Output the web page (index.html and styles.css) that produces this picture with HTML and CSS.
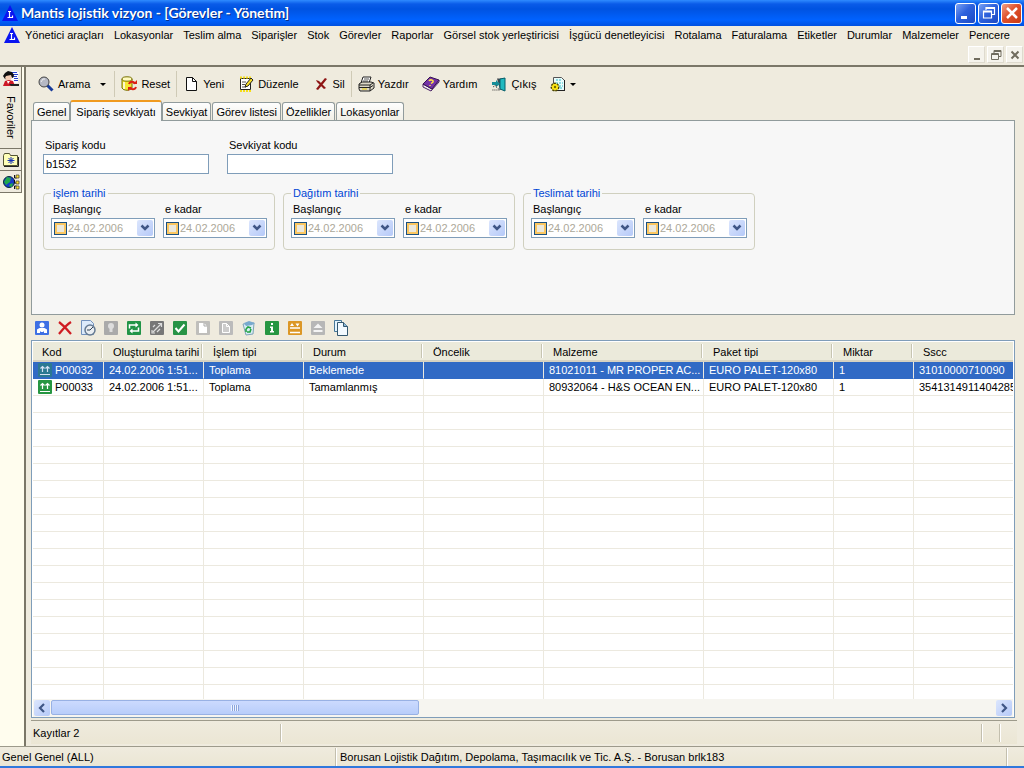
FILE: index.html
```html
<!DOCTYPE html>
<html lang="tr">
<head>
<meta charset="utf-8">
<title>Mantis lojistik vizyon - [Görevler - Yönetim]</title>
<link rel="stylesheet" href="styles.css">
</head>
<body>
<svg class="defs" aria-hidden="true">
  <symbol id="logo" viewBox="0 0 16 16"><path d="M8 0L16 16H0Z" fill="#0a14f0"/><path d="M6 6.500h3M7.500 6.500v6M5.500 12.500h5v-2" fill="none" stroke="#fff" stroke-width="1.200"/></symbol>
  <symbol id="chev" viewBox="0 0 10 10"><path d="M1.500 2.500L5 6L8.500 2.500" fill="none" stroke="#3f5686" stroke-width="2.500"/></symbol>
  <symbol id="up" viewBox="0 0 14 14"><rect width="14" height="14" rx="1" fill="currentColor"/><path d="M4.500 9V3.500M2.500 5.500l2-2 2 2M9.500 9V3.500M7.500 5.500l2-2 2 2M2 11.500h10" fill="none" stroke="#fff" stroke-width="1.200"/></symbol>
</svg>

<header class="titlebar">
  <svg class="i16"><use href="#logo"/></svg>
  <h1 class="title">Mantis lojistik vizyon - [Görevler - Yönetim]</h1>
  <div class="winbtns">
    <button class="winbtn" aria-label="Simge durumuna küçült"><svg class="i16"><path d="M3 11h6v3H3z" fill="#fff"/></svg></button>
    <button class="winbtn" aria-label="Geri yükle"><svg class="i16"><path d="M5 5V2.500h8.500v7H11M2.500 6h8v7h-8zM2.500 7h8M5 3.500h8" fill="none" stroke="#fff" stroke-width="1.200"/></svg></button>
    <button class="winbtn winbtn-close" aria-label="Kapat"><svg class="i16"><path d="M3 3l10 10M13 3L3 13" stroke="#fff" stroke-width="2.500"/></svg></button>
  </div>
</header>

<nav class="menubar">
  <svg class="i16"><use href="#logo"/></svg>
  <button>Yönetici araçları</button><button>Lokasyonlar</button><button>Teslim alma</button><button>Siparişler</button><button>Stok</button><button>Görevler</button><button>Raporlar</button><button>Görsel stok yerleştiricisi</button><button>İşgücü denetleyicisi</button><button>Rotalama</button><button>Faturalama</button><button>Etiketler</button><button>Durumlar</button><button>Malzemeler</button><button>Pencere</button>
</nav>
<div class="mdibar">
  <button aria-label="Pencereyi küçült"><svg class="i12"><path d="M3 9h6v2H3z" fill="#706c5e"/></svg></button>
  <button aria-label="Pencereyi geri yükle"><svg class="i12"><path d="M4 4V1.500h7v6H8.500M1.500 4.500h7v6h-7zM1.500 5.500h7M4 2.500h7" fill="none" stroke="#706c5e"/></svg></button>
  <button aria-label="Pencereyi kapat"><svg class="i12"><path d="M2.500 2.500l7 7M9.500 2.500l-7 7" stroke="#706c5e" stroke-width="2"/></svg></button>
</div>

<div class="body">
  <aside class="side">
    <button class="side-tab side-fav">
      <svg class="i16"><path d="M6 1h8v1h2v2h-1v9H6z" fill="#fff"/><path d="M8 2.500h6M10 4.500h5M10 6.500h4M11 8.500h4M11 10.500h4" stroke="#2840d0"/><path d="M2 3l3-2 4 1 2 3-1 3-3-1-1 3-4-1-2-3z" fill="#101010"/><path d="M3 6l5-1 1 3-2 3H4L2 8z" fill="#f5cdb5"/><path d="M2 11l4-1 4 1 2 5H0z" fill="#ce1826"/><path d="M4 11h3l-2 3z" fill="#fff"/><path d="M6 14h10v2H8z" fill="#222"/></svg>
      <span>Favoriler</span>
    </button>
    <button class="side-tab" aria-label="Klasörler"><svg class="i16"><path d="M.5 13.500v-10l1-2h5l1 2h7v10z" fill="#ffffb8" stroke="#555535"/><path d="M1 14.500h14.500V5" fill="none" stroke="#222"/><path d="M8 5v7M4.500 8.500h7M5.500 6l5 5M10.500 6l-5 5" stroke="#142fb5"/></svg></button>
    <button class="side-tab" aria-label="Ağ"><svg class="i16"><circle cx="6" cy="8" r="5.500" fill="#1739cb" stroke="#062a37"/><path d="M4 3l4 1-1 4-4 3-2-3zM7 10l3-1-1 4-3-1z" fill="#20a94c"/><path d="M11.500 1v3h2M11.500 6v3h2M11.500 15v-3h2" fill="none" stroke="#111"/><path d="M13 1h3v3h-3zM13 7h3v3h-3zM13 12h3v3h-3z" fill="#ffe52b" stroke="#333" stroke-width=".7"/></svg></button>
  </aside>

  <main class="work">
    <div class="toolbar">
      <button><svg class="i16"><path d="M9 9l5.500 5.500" stroke="#173a9a" stroke-width="3"/><circle cx="6" cy="6" r="5" fill="#b5b8c4" stroke="#444"/><path d="M3 6l2-3h2" fill="none" stroke="#eee"/></svg>Arama<svg class="drop"><path d="M0 0h6L3 3z"/></svg></button>
      <i class="sep"></i>
      <button><svg class="i16"><path d="M1 3v9c2 3 8 3 10 0V3" fill="#f6e833" stroke="#777000"/><ellipse cx="6" cy="3" rx="5" ry="2.200" fill="#fffbc0" stroke="#777000"/><path d="M3 6v7" stroke="#fff" stroke-width="1.500"/><path d="M8 8c1-3 5-3 6 0M15 11c-1 3-5 3-6 0" fill="none" stroke="#dc2015" stroke-width="2"/><path d="M12 8h4V4zM7 11h4l-4 4z" fill="#dc2015"/></svg>Reset</button>
      <i class="sep"></i>
      <button><svg class="i16"><path d="M3.500 1.500h6l4 4v9h-10z" fill="#fff" stroke="#111"/><path d="M9.500 1.500v4h4" fill="none" stroke="#111"/></svg>Yeni</button>
      <button><svg class="i16"><path d="M2.500 2.500h10v11h-10z" fill="#fff" stroke="#222"/><path d="M2 1.500h11M2 15h11" stroke="#f6de18" stroke-width="2" stroke-dasharray="2 1"/><path d="M4 6h4M4 8.500h3M4 11h4" stroke="#555"/><path d="M7 11l1-3 5-6 2 2-5 6z" fill="#f8df28" stroke="#222"/></svg>Düzenle</button>
      <button><svg class="i16"><path d="M3 4l3 1 3 3 4 4-2 1-3-3-4-4zM12 2l2 1-4 5-5 6-2-1 4-5z" fill="#8e1514"/></svg>Sil</button>
      <i class="sep"></i>
      <button><svg class="i16"><path d="M5 1h8l-2 6H3z" fill="#fff" stroke="#222"/><path d="M6 3h5M5 5h5" stroke="#555"/><path d="M1 8l3-2h9l3 1v5l-4 3H2l-1-2z" fill="#ddd9c9" stroke="#222"/><path d="M1 9h11l3-2M1 11.500h11l3-2M12 9v6" fill="none" stroke="#222"/><path d="M4 13h5" stroke="#e5c800"/></svg>Yazdır</button>
      <button><svg class="i16"><path d="M0 8v3l8 4 8-9V4l-7 9z" fill="#eee" stroke="#4b2167"/><path d="M0 8l7-7 9 3-7 9z" fill="#7433a5" stroke="#381352"/><path d="M6 5c1-2 5-1 4 1L8 7.500M7 9v1" fill="none" stroke="#ffe645" stroke-width="1.500"/></svg>Yardım</button>
      <button><svg class="i16"><path d="M6 2.500h8v11H9z" fill="#404850"/><path d="M9 3l5-1v13l-5-2z" fill="#21b9bf" stroke="#075f6b"/><path d="M1 6h4V4l4 4-4 3V9H1z" fill="#168e98"/><path d="M2 11l3-2v2l4 3H1" fill="none" stroke="#333" stroke-dasharray="1 1"/></svg>Çıkış</button>
      <button aria-label="Seçenekler"><svg class="i16"><path d="M3.500 1.500h8l3 3v10h-11z" fill="#e8fbfb" stroke="#555"/><path d="M6 4h5M6 7h7M9 10h4M10 12h3" stroke="#33bcc6" stroke-dasharray="2 1"/><path d="M14.500 4v11M6 14.500h9" stroke="#222"/><circle cx="5" cy="11" r="3.500" fill="#ffe713" stroke="#4d4700" stroke-width="2" stroke-dasharray="2 1"/><circle cx="5" cy="11" r="3" fill="#ffe713"/><circle cx="5" cy="11" r="1.200" fill="#766c00"/></svg><svg class="drop"><path d="M0 0h6L3 3z"/></svg></button>
    </div>

    <div class="tabs" role="tablist">
      <button role="tab">Genel</button><button role="tab" class="active" aria-selected="true">Sipariş sevkiyatı</button><button role="tab">Sevkiyat</button><button role="tab">Görev listesi</button><button role="tab">Özellikler</button><button role="tab">Lokasyonlar</button>
    </div>

    <section class="panel" role="tabpanel">
      <div class="codes">
        <label class="field">Sipariş kodu<input type="text" value="b1532"></label>
        <label class="field">Sevkiyat kodu<input type="text"></label>
      </div>
      <div class="groups">
        <fieldset><legend>işlem tarihi</legend>
          <div class="dcol"><label for="d1">Başlangıç</label><div class="date"><input type="checkbox" aria-label="Etkin"><input id="d1" type="text" value="24.02.2006" disabled><button aria-label="Takvim"><svg class="i10"><use href="#chev"/></svg></button></div></div>
          <div class="dcol"><label for="d2">e kadar</label><div class="date"><input type="checkbox" aria-label="Etkin"><input id="d2" type="text" value="24.02.2006" disabled><button aria-label="Takvim"><svg class="i10"><use href="#chev"/></svg></button></div></div>
        </fieldset>
        <fieldset><legend>Dağıtım tarihi</legend>
          <div class="dcol"><label for="d3">Başlangıç</label><div class="date"><input type="checkbox" aria-label="Etkin"><input id="d3" type="text" value="24.02.2006" disabled><button aria-label="Takvim"><svg class="i10"><use href="#chev"/></svg></button></div></div>
          <div class="dcol"><label for="d4">e kadar</label><div class="date"><input type="checkbox" aria-label="Etkin"><input id="d4" type="text" value="24.02.2006" disabled><button aria-label="Takvim"><svg class="i10"><use href="#chev"/></svg></button></div></div>
        </fieldset>
        <fieldset><legend>Teslimat tarihi</legend>
          <div class="dcol"><label for="d5">Başlangıç</label><div class="date"><input type="checkbox" aria-label="Etkin"><input id="d5" type="text" value="24.02.2006" disabled><button aria-label="Takvim"><svg class="i10"><use href="#chev"/></svg></button></div></div>
          <div class="dcol"><label for="d6">e kadar</label><div class="date"><input type="checkbox" aria-label="Etkin"><input id="d6" type="text" value="24.02.2006" disabled><button aria-label="Takvim"><svg class="i10"><use href="#chev"/></svg></button></div></div>
        </fieldset>
      </div>
    </section>

    <div class="actions">
      <button aria-label="Kullanıcı"><svg class="i16"><rect x="1" y="1" width="14" height="14" rx="1" fill="#3e70e4"/><circle cx="8" cy="5" r="2.500" fill="#fff"/><path d="M3 13V9.500l2.500-1.500h5L13 9.500V13h-3v-2l-1 1H7l-1-1v2z" fill="#fff"/></svg></button>
      <button aria-label="Sil"><svg class="i16"><path d="M2 2c4 3 8 7 12 12M14 2C9 5 6 9 2 14" fill="none" stroke="#cf1c22" stroke-width="2.200"/></svg></button>
      <button aria-label="Zamanla"><svg class="i16"><path d="M1.500.5h9l3 3v11h-12z" fill="#dceafb" stroke="#7291bd"/><circle cx="10" cy="10" r="5" fill="#e9edf2" stroke="#657a92" stroke-width="1.500"/><path d="M10 10l3-3M10 10H7" stroke="#345"/></svg></button>
      <button aria-label="Öneri" disabled><svg class="i16"><rect x="1" y="1" width="14" height="14" rx="1" fill="#aaa"/><circle cx="8" cy="6" r="3" fill="#ddd"/><path d="M6.500 8h3v4h-3z" fill="#ddd"/></svg></button>
      <button aria-label="Değiştir"><svg class="i16"><rect x="1" y="1" width="14" height="14" rx="1" fill="#219447"/><path d="M3.500 8.500V5H10M12.500 7.500V11H6" fill="none" stroke="#fff" stroke-width="1.500"/><path d="M9.500 2.500l3 2.500-3 2.500zM6.500 8.500v5l-3-2.500z" fill="#fff"/></svg></button>
      <button aria-label="Bağlantıyı kes" disabled><svg class="i16"><rect x="1" y="1" width="14" height="14" rx="1" fill="#777"/><path d="M4 12l8-8M9 3.500h3.500V7M4 7l2-2M8 12l3-3M3 10v3h3" fill="none" stroke="#ddd" stroke-width="1.200"/></svg></button>
      <button aria-label="Onayla"><svg class="i16"><rect x="1" y="1" width="14" height="14" rx="1" fill="#279345"/><path d="M3.500 8l3 3.500 6-7" fill="none" stroke="#fff" stroke-width="2"/></svg></button>
      <button aria-label="Belge" disabled><svg class="i16"><rect x="1" y="1" width="14" height="14" rx="1" fill="#bfbebb"/><path d="M4 3h5l3 3v7H4z" fill="#fff"/><path d="M9 3v3h3" fill="none" stroke="#aaa"/></svg></button>
      <button aria-label="Belge kopyası" disabled><svg class="i16"><rect x="1" y="1" width="14" height="14" rx="1" fill="#bbb"/><path d="M4.500 3.500h4l3 3v6h-7z" fill="#ccc" stroke="#fff"/><path d="M8.500 3.500v3h3" fill="none" stroke="#fff"/></svg></button>
      <button aria-label="Geri dönüşüm"><svg class="i16"><path d="M2 4l11-1-1 11-7 1z" fill="#d8edf5" stroke="#7fa3b8"/><path d="M3 3l5-2 6 2-3 2-6 1z" fill="#78a9ce"/><path d="M5 9l2-2 3 1M10 9l-1 3H6M5 12V9" fill="none" stroke="#22a343" stroke-width="1.600"/></svg></button>
      <button aria-label="Bilgi"><svg class="i16"><rect x="1" y="1" width="14" height="14" rx="1" fill="#279642"/><path d="M7 3h2v2H7zM6 6.500h3V11h1v1.500H6V11h1V8H6z" fill="#fff"/></svg></button>
      <button aria-label="Sırala"><svg class="i16"><rect x="1" y="1" width="14" height="14" rx="1" fill="#dc9725"/><path d="M3 8h10M3 12.500h10" stroke="#fff" stroke-width="1.500"/><path d="M3 6l2-3 2 3zM8.500 3.500h4l-2 3z" fill="#fff"/></svg></button>
      <button aria-label="Çıkar" disabled><svg class="i16"><rect x="1" y="1" width="14" height="14" rx="1" fill="#b7b7b7"/><path d="M3.500 8L8 3.500 12.500 8zM3.500 10h9v2h-9z" fill="#f4f4f4"/></svg></button>
      <button aria-label="Kopyala"><svg class="i16"><path d="M1.500.5h7v11h-7z" fill="#e5f5ff" stroke="#467799"/><path d="M4.500 2.500h6l4 4v9h-10z" fill="#f3faff" stroke="#345870"/><path d="M10.500 2.500v4h4" fill="#8ab8d8" stroke="#345870"/></svg></button>
    </div>

    <div class="list">
      <div class="grid-wrap">
        <table class="grid">
          <colgroup><col class="c72"><col class="c100"><col class="c100"><col class="c120"><col class="c120"><col class="c160"><col class="c130"><col class="c80"><col></colgroup>
          <thead><tr><th>Kod</th><th>Oluşturulma tarihi</th><th>İşlem tipi</th><th>Durum</th><th>Öncelik</th><th>Malzeme</th><th>Paket tipi</th><th>Miktar</th><th>Sscc</th></tr></thead>
          <tbody>
            <tr class="sel"><td class="kod"><svg class="i14"><use href="#up"/></svg>P00032</td><td>24.02.2006 1:51...</td><td>Toplama</td><td>Beklemede</td><td></td><td>81021011 - MR PROPER AC...</td><td>EURO PALET-120x80</td><td>1</td><td class="clip">31010000710090</td></tr>
            <tr><td class="kod"><svg class="i14"><use href="#up"/></svg>P00033</td><td>24.02.2006 1:51...</td><td>Toplama</td><td>Tamamlanmış</td><td></td><td>80932064 - H&amp;S OCEAN EN...</td><td>EURO PALET-120x80</td><td>1</td><td class="clip">3541314911404285</td></tr>
            <tr class="fill"><td></td><td></td><td></td><td></td><td></td><td></td><td></td><td></td><td></td></tr>
          </tbody>
        </table>
      </div>
      <div class="scroll">
        <button class="sbtn" aria-label="Sola kaydır"><svg class="i10"><path d="M7 1L3 5l4 4" fill="none" stroke="#3f5686" stroke-width="2.200"/></svg></button>
        <div class="track"><div class="thumb"><i class="grip"></i></div></div>
        <button class="sbtn" aria-label="Sağa kaydır"><svg class="i10"><path d="M3 1l4 4-4 4" fill="none" stroke="#3f5686" stroke-width="2.200"/></svg></button>
      </div>
    </div>

    <div class="status inner"><span class="s-count">Kayıtlar 2</span><span class="s-grow"></span><span class="s-cell"></span><span class="s-cell"></span></div>
  </main>
</div>

<footer class="status outer"><span class="s-user">Genel Genel (ALL)</span><span class="s-grow">Borusan Lojistik Dağıtım, Depolama, Taşımacılık ve Tic. A.Ş. - Borusan brlk183</span><span class="s-cell"></span></footer>
</body>
</html>
```
FILE: styles.css
```css
* { box-sizing: border-box; }
body {
  margin: 0; min-height: 100vh; display: flex; flex-direction: column;
  background: #efebde; color: #000; border-bottom: 2px solid #3078dc;
  font: 11px/14px "Liberation Sans", Arial, sans-serif;
}
button, input { font: inherit; color: inherit; margin: 0; }
button { border: 0; background: none; padding: 0; white-space: nowrap; }
svg { display: block; flex: none; overflow: visible; }
.defs { position: absolute; width: 0; height: 0; }
.i16 { width: 16px; height: 16px; }
.i14 { width: 14px; height: 14px; }
.i12 { width: 12px; height: 12px; }
.i10 { width: 10px; height: 10px; }
.drop { width: 6px; height: 3px; }

.titlebar {
  height: 26px; display: flex; align-items: center; gap: 3px; padding: 0 2px;
  background: linear-gradient(#2f8bff 0, #0a5be8 4px, #0053e1 9px, #0062ff 20px, #0050e0 26px);
}
.title { flex: 1; margin: 0; color: #fff; font: bold 14px/16px Lato, sans-serif; text-shadow: 1px 1px #0a2f8a; white-space: nowrap; }
.winbtns { display: flex; gap: 2px; }
.winbtn {
  width: 21px; height: 21px; display: grid; place-items: center; border: 1px solid #fff; border-radius: 3px;
  background: linear-gradient(135deg, #7aa2f4, #2e62dd 45%, #1c49c4);
}
.winbtn-close { background: linear-gradient(135deg, #f0a188, #df512c 45%, #c93a12); }

.menubar { height: 18px; display: flex; align-items: center; gap: 10px; padding: 0 4px; }
.menubar svg { margin-right: -5px; }
.mdibar { height: 21px; display: flex; justify-content: flex-end; align-items: center; gap: 2px; padding: 0 1px; }
.mdibar button { width: 17px; height: 17px; display: grid; place-items: center; background: #f5f3ec; border: 1px solid; border-color: #fff #dedace #dedace #fff; }

.body { flex: 1; display: flex; border-top: 2px solid #7b7768; }
.side { width: 24px; background: #fffdee; }
.side-tab {
  width: 22px; height: 22px; display: flex; flex-direction: column; align-items: center; gap: 10px; padding-top: 3px;
  background: #efebde; border: solid #7b7768; border-width: 0 1px 1px 0;
}
.side-fav { height: 82px; }
.side-fav span { writing-mode: vertical-rl; }

.work { flex: 1; min-width: 0; display: flex; flex-direction: column; border-left: 2px solid #7b7768; padding: 4px 9px 2px 5px; }
.toolbar { height: 29px; display: flex; align-items: center; gap: 6px; padding: 0 0 3px 3px; }
.toolbar button { height: 24px; display: flex; align-items: center; gap: 4px; padding: 0 4px; }
.toolbar .drop { margin: 0 2px 0 6px; }
.toolbar button[aria-label] .drop { margin: 0; }
.sep { align-self: stretch; width: 1px; margin: 0 -4px; background: #cfcab6; }

.tabs { display: flex; align-items: flex-end; height: 20px; gap: 1px; padding-left: 2px; }
.tabs button {
  height: 18px; padding: 0 3px; background: linear-gradient(#fefefe, #f1efe6);
  border: 1px solid #919b9c; border-bottom: 0; border-radius: 3px 3px 0 0;
}
.tabs .active {
  height: 21px; margin: 0 -1px -1px; padding: 0 5px; z-index: 1; background: #f7f7f7;
  border-top: 2px solid #f09a20;
}
.panel { height: 195px; padding: 17px 11px; background: #f7f7f7; border: 1px solid #919b9c; }
.codes { display: flex; gap: 18px; }
.field { width: 166px; display: flex; flex-direction: column; gap: 2px; text-indent: 2px; }
.field input { height: 20px; padding: 0 2px; border: 1px solid #7f9db9; background: #fff; }
.groups { display: flex; gap: 8px; margin-top: 12px; }
fieldset { width: 232px; height: 64px; margin: 0; padding: 2px 7px; border: 1px solid #d0d0bf; border-radius: 4px; display: flex; gap: 8px; }
legend { padding: 0 2px; color: #0046d5; }
.dcol { width: 104px; display: flex; flex-direction: column; gap: 2px; }
.dcol label { padding-left: 2px; }
.date { height: 20px; display: flex; align-items: center; border: 1px solid #7f9db9; background: #fff; padding: 0 1px 0 2px; }
.date input[type="checkbox"] { appearance: none; width: 13px; height: 13px; border: 1px solid #1c5180; background: #ece9dc; box-shadow: inset 0 0 0 2px #fbc761; }
.date input[type="text"] { flex: 1; min-width: 0; padding: 0 1px; border: 0; background: none; color: #aca899; }
.date button, .sbtn { width: 16px; height: 16px; display: grid; place-items: center; background: linear-gradient(135deg, #dce6fd, #b5c9f8); border-radius: 2px; }

.actions { height: 25px; display: flex; align-items: center; gap: 7px; padding-left: 3px; }

.list { flex: 1; display: flex; flex-direction: column; border: 1px solid #7f9db9; background: #fff; padding: 1px 1px 0; }
.grid-wrap { flex: 1; display: flex; overflow: hidden; }
.grid { width: 100%; table-layout: fixed; border-collapse: separate; border-spacing: 0; }
.c72 { width: 71px; } .c80 { width: 80px; } .c100 { width: 100px; } .c120 { width: 120px; } .c130 { width: 130px; } .c160 { width: 160px; }
.grid th {
  height: 20px; padding: 2px 0 0 9px; text-align: left; font-weight: normal; white-space: nowrap;
  background: linear-gradient(90deg, #fff, #fff) right 1px center / 1px 14px no-repeat, linear-gradient(90deg, #c7c5b2, #c7c5b2) right 2px center / 1px 14px no-repeat, #ebeadb;
  border-bottom: 2px solid #d6d2c2;
}
.grid th:last-child { background: #ebeadb; }
.grid td { height: 17px; padding: 0 1px 0 5px; line-height: 16px; overflow: hidden; white-space: nowrap; text-overflow: ellipsis; border: solid #ece9df; border-width: 0 1px 1px 0; }
.grid td:last-child { border-right: 0; }
.grid .clip { padding-right: 0; text-overflow: clip; }
.kod svg { float: left; margin: 1px 3px 0 0; color: #279642; }
.grid .sel td { background: #316ac5; color: #fff; border-bottom-color: #316ac5; }
.sel .kod svg { color: #2c7d86; opacity: .8; }
.grid .fill td { height: auto; border-bottom: 0; background: repeating-linear-gradient(#fff 0 16px, #ece9df 16px 17px); }
.scroll { height: 18px; display: flex; align-items: center; background: #f6f5f0; padding: 0 1px 1px; }
.track { flex: 1; padding: 0 1px; }
.thumb { width: 39%; height: 15px; display: grid; place-items: center; border: 1px solid #98b1e4; border-radius: 2px; background: linear-gradient(#cbdafe, #b8cdfa); }
.grip { width: 8px; height: 6px; background: repeating-linear-gradient(90deg, #eef4fe 0 1px, #8ca5dc 1px 2px); }

.status { display: flex; align-items: center; white-space: nowrap; background: linear-gradient(#efebde, #ebe6d4); border-top: 1px solid #9d9a8b; }
.status span { height: 18px; line-height: 18px; padding: 0 2px; }
.status span + span { border-left: 1px solid #c3bfae; box-shadow: inset 1px 0 #fff; }
.inner { height: 24px; margin: 2px -2px 0 0; }
.outer { height: 20px; }
.s-count { width: 249px; }
.s-user { width: 335px; }
.status .s-grow { flex: 1; padding-left: 4px; }
.s-cell { width: 18px; }
```
